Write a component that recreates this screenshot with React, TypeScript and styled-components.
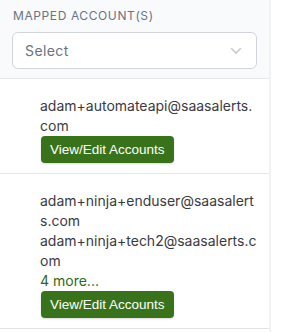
import React from "react";
import styled, { createGlobalStyle } from "styled-components";

const rows = [
    { emails: ["adam+automateapi@saasalerts.com"], more: 0 },
    {
        emails: [
            "adam+ninja+enduser@saasalerts.com",
            "adam+ninja+tech2@saasalerts.com",
        ],
        more: 4,
    },
];

const App = () => {
    return (
        <>
            <GlobalStyle />
            <Page>
                <Column>
                    <HeaderCell>
                        <Label>Mapped Account(s)</Label>
                        <SelectBox>
                            <Placeholder>Select</Placeholder>
                            <svg width="12" height="8" viewBox="0 0 12 8">
                                <path
                                    d="M1.5 1.5 L6 6 L10.5 1.5"
                                    fill="none"
                                    stroke="#c7cad0"
                                    strokeWidth="1.6"
                                    strokeLinecap="round"
                                />
                            </svg>
                        </SelectBox>
                    </HeaderCell>
                    {rows.map((row, index) => {
                        return (
                            <Row key={index}>
                                {row.emails.map((email) => (
                                    <Email key={email}>{email}</Email>
                                ))}
                                {row.more > 0 && <More>{row.more} more...</More>}
                                <EditButton>View/Edit Accounts</EditButton>
                            </Row>
                        );
                    })}
                </Column>
            </Page>
        </>
    );
};

export default App;

const GlobalStyle = createGlobalStyle`
    html, body {
        margin: 0;
        padding: 0;
        background: #fff;
        font-family: Inter, "Liberation Sans", sans-serif;
    }
`;

const Page = styled.div`
    display: flex;
    width: 289px;
    height: 332px;
    overflow: hidden;
`;

const Column = styled.div`
    width: 269px;
    border-right: 2px solid #f1f2f4;
    display: flex;
    flex-direction: column;
`;

const HeaderCell = styled.div`
    background: #f9fafb;
    padding: 9px 12px;
    border-bottom: 1px solid #e5e7eb;
    height: 79px;
    box-sizing: border-box;
    flex-shrink: 0;
`;

const Label = styled.div`
    font-size: 12px;
    line-height: 14px;
    text-transform: uppercase;
    letter-spacing: 0.6px;
    color: #6b7280;
    margin-left: 1px;
`;

const SelectBox = styled.div`
    margin-top: 9px;
    height: 37px;
    box-sizing: border-box;
    background: #fff;
    border: 1px solid #d1d5db;
    border-radius: 6px;
    display: flex;
    align-items: center;
    justify-content: space-between;
    padding: 0 14px 0 12px;
`;

const Placeholder = styled.span`
    font-size: 14px;
    letter-spacing: 0.4px;
    color: #6b7280;
`;

const Row = styled.div`
    padding: 17px 12px 10px 40px;
    border-bottom: 1px solid #e3e5e8;
    display: flex;
    flex-direction: column;
    align-items: flex-start;
    flex-shrink: 0;
`;

const Email = styled.div`
    font-size: 14px;
    line-height: 20px;
    color: #3a3a3f;
    word-break: break-all;
    width: 100%;
`;

const More = styled.div`
    font-size: 14px;
    line-height: 20px;
    color: #2d6a14;
`;

const EditButton = styled.button`
    margin: 0 0 0 1px;
    background: #38731c;
    color: #fff;
    border: none;
    border-radius: 4px;
    height: 27px;
    padding: 0 9px;
    font-family: "Liberation Sans", Arial, sans-serif;
    font-size: 13.5px;
    box-shadow: 0 1px 2px rgba(0, 0, 0, 0.15);
    cursor: pointer;
`;
